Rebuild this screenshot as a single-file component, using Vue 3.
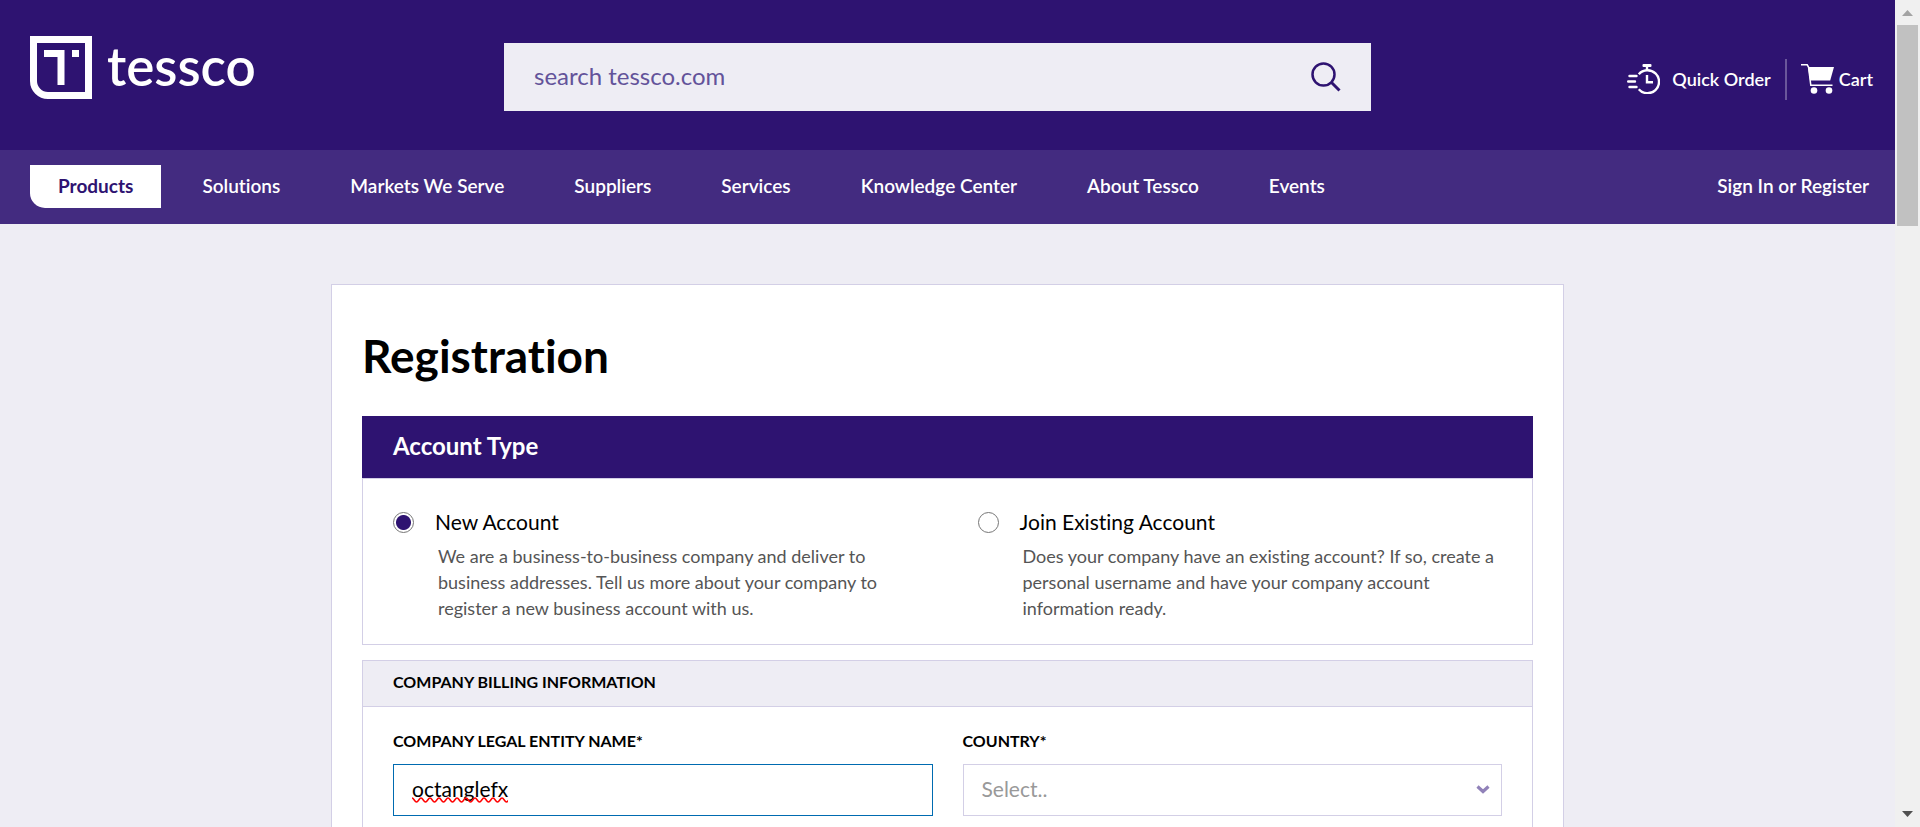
<script setup>
import { ref } from 'vue'

const navItems = [
  'Products',
  'Solutions',
  'Markets We Serve',
  'Suppliers',
  'Services',
  'Knowledge Center',
  'About Tessco',
  'Events',
]
const activeItem = 'Products'

const accountTypes = [
  {
    id: 'new',
    title: 'New Account',
    text: 'We are a business-to-business company and deliver to business addresses. Tell us more about your company to register a new business account with us.',
  },
  {
    id: 'existing',
    title: 'Join Existing Account',
    text: 'Does your company have an existing account? If so, create a personal username and have your company account information ready.',
  },
]

const accountType = ref('new')
const search = ref('')
const companyName = ref('octanglefx')
const country = ref('')
</script>

<template>
  <div class="window">
    <div class="page">
      <header class="top">
        <a class="logo" href="#" aria-label="tessco">
          <svg class="logo-mark" viewBox="0 0 62 63" aria-hidden="true">
            <path d="M3.500 3.500H58.500V59.500H18A14.500 14.500 0 0 1 3.500 45Z" fill="none" stroke="#fff" stroke-width="7" />
            <path d="M14 14H34.500V49H27.500V21H14Z" fill="#fff" />
            <rect x="42" y="14" width="7" height="7" fill="#fff" />
          </svg>
          <span class="logo-text">tessco</span>
        </a>

        <form class="search" role="search" @submit.prevent>
          <input v-model="search" type="text" placeholder="search tessco.com" aria-label="search tessco.com" />
          <button type="submit" aria-label="Search">
            <svg viewBox="0 0 30 30" aria-hidden="true">
              <circle cx="12.500" cy="12.500" r="11" fill="none" stroke="#2e1371" stroke-width="2.500" />
              <path d="M20.500 20.500L28.500 28.500" stroke="#2e1371" stroke-width="3" />
            </svg>
          </button>
        </form>

        <div class="tools">
          <a class="quick" href="#">
            <svg class="timer" viewBox="0 0 33 30" aria-hidden="true">
              <g fill="none" stroke="#fff" stroke-width="2.400">
                <path d="M11.800 10.200A11.500 11.500 0 1 1 11.800 25.200" />
                <path d="M20 11V18.200H26" />
                <path d="M20 2V6" />
                <path d="M2.500 12H9.500M1.200 17.500H8M2.500 23H9.500" stroke-linecap="round" />
              </g>
              <rect x="15.500" y="0" width="9" height="3" rx="1" fill="#fff" />
            </svg>
            <span>Quick Order</span>
          </a>
          <span class="divider"></span>
          <a class="cart" href="#">
            <svg class="cart-icon" viewBox="0 0 33 30" aria-hidden="true">
              <path d="M0 .8H6.200L7.500 3L9.800 21.300H31.500" fill="none" stroke="#fff" stroke-width="1.500" />
              <path d="M7 3H33L29.200 16.500H9Z" fill="#fff" />
              <circle cx="13" cy="26.500" r="3.300" fill="#fff" />
              <circle cx="28" cy="26.500" r="3.300" fill="#fff" />
            </svg>
            <span>Cart</span>
          </a>
        </div>
      </header>

      <nav class="nav" aria-label="Main">
        <a
          v-for="item in navItems"
          :key="item"
          href="#"
          :class="{ active: item === activeItem }"
        >{{ item }}</a>
        <a class="sign-in" href="#">Sign In or Register</a>
      </nav>

      <main class="card">
        <h1>Registration</h1>

        <section>
          <h2 class="banner">Account Type</h2>
          <div class="box types">
            <div v-for="type in accountTypes" :key="type.id" class="type">
              <input :id="type.id" v-model="accountType" type="radio" name="account-type" :value="type.id" />
              <div>
                <label :for="type.id">{{ type.title }}</label>
                <p>{{ type.text }}</p>
              </div>
            </div>
          </div>
        </section>

        <section class="billing">
          <h3>Company Billing Information</h3>
          <div class="fields">
            <div class="field">
              <label for="company">Company Legal Entity Name*</label>
              <div class="wrap">
                <input id="company" v-model="companyName" class="control focused" type="text" spellcheck="false" />
                <svg class="squiggle" aria-hidden="true">
                  <defs>
                    <pattern id="wave" width="9" height="6" patternUnits="userSpaceOnUse">
                      <path d="M0 1Q1 1 2.250 3Q3.500 5 4.500 5Q5.500 5 6.750 3Q8 1 9 1" fill="none" stroke="#f00" stroke-width="1.500" />
                    </pattern>
                  </defs>
                  <rect width="100%" height="6" fill="url(#wave)" />
                </svg>
              </div>
            </div>
            <div class="field">
              <label for="country">Country*</label>
              <div class="wrap">
                <select id="country" v-model="country" class="control">
                  <option value="">Select..</option>
                  <option value="us">United States</option>
                  <option value="ca">Canada</option>
                </select>
                <svg class="chevron" viewBox="0 0 14 9" aria-hidden="true">
                  <path d="M1.500 1.500L7 6.500L12.500 1.500" fill="none" stroke="#9182b9" stroke-width="3.200" />
                </svg>
              </div>
            </div>
          </div>
        </section>
      </main>
    </div>

    <div class="scrollbar" aria-hidden="true">
      <svg viewBox="0 0 11 6"><path d="M5.500 0L11 6H0Z" fill="#a3a3a3" /></svg>
      <div class="thumb"></div>
      <svg class="down" viewBox="0 0 11 6"><path d="M0 0H11L5.500 6Z" fill="#505050" /></svg>
    </div>
  </div>
</template>

<style>
body {
  margin: 0;
}
</style>

<style scoped>
.window {
  display: flex;
  height: 100vh;
  overflow: hidden;
  background: #eeedf4;
  color: #000;
  font-family: Lato, "Liberation Sans", sans-serif;
  font-size: 18px;
  font-variant-ligatures: none;
}

.window *,
.window {
  box-sizing: border-box;
}

.page {
  flex: 1;
  min-width: 0;
}

a {
  color: #fff;
  text-decoration: none;
}

input,
select,
button {
  margin: 0;
  font: inherit;
  color: inherit;
}

.top {
  display: grid;
  grid-template-columns: 474fr 867fr 502fr;
  align-items: center;
  height: 150px;
  padding: 0 22px 0 30px;
  background: #2e1371;
}

.logo {
  display: flex;
  align-items: center;
  gap: 15px;
  padding-bottom: 15px;
}

.logo-mark {
  width: 62px;
  height: 63px;
}

.logo-text {
  padding-bottom: 4px;
  font-size: 53px;
  font-weight: 600;
  line-height: 60px;
}

.search {
  display: flex;
  height: 68px;
  padding: 0 30px;
  margin-top: 4px;
  background: #eeedf4;
}

.search input {
  flex: 1;
  min-width: 0;
  padding: 0 0 4px;
  border: 0;
  outline: 0;
  background: none;
  color: #2e1371;
  font-size: 24px;
}

.search input::placeholder {
  color: #63539a;
  opacity: 1;
}

.search button {
  display: flex;
  align-items: center;
  padding: 0;
  border: 0;
  background: none;
}

.search button svg {
  width: 30px;
  height: 30px;
}

.tools {
  display: flex;
  align-items: center;
  justify-content: flex-end;
  gap: 14px;
  padding-top: 8px;
  font-weight: 600;
}

.quick,
.cart {
  display: flex;
  align-items: center;
}

.quick {
  gap: 12px;
}

.cart {
  gap: 5px;
}

.timer,
.cart-icon {
  width: 33px;
  height: 30px;
}

.divider {
  width: 2px;
  height: 41px;
  background: #6a579b;
}

.nav {
  display: flex;
  align-items: center;
  height: 74px;
  padding: 0 26px 2px 30px;
  background: #432b80;
  font-size: 19px;
  font-weight: 600;
}

.nav a {
  padding: 0 35px 2px;
  line-height: 41px;
}

.nav a.active {
  padding: 0 28px 2px;
  margin-right: 6px;
  border-radius: 0 0 0 15px;
  background: #fff;
  color: #2e1371;
  font-weight: 700;
}

.nav a.sign-in {
  padding: 0 0 2px;
  margin-left: auto;
}

.card {
  width: 90%;
  max-width: 1233px;
  min-height: 100%;
  padding: 40px 30px;
  margin: 60px auto 0;
  border: 1px solid #d3cfe6;
  background: #fff;
}

h1 {
  margin: 0 0 30px;
  font-size: 46px;
  font-weight: 700;
  line-height: 61px;
}

.banner {
  padding: 0 31px 2px;
  margin: 0;
  background: #2e1371;
  color: #fff;
  font-size: 24px;
  font-weight: 700;
  line-height: 60px;
}

.box {
  border: 1px solid #d3cfe6;
}

.types {
  display: grid;
  grid-template-columns: 1fr 1fr;
  padding: 26px 0 23px;
}

.type {
  display: flex;
  gap: 21px;
  padding: 0 30px;
}

.type input {
  flex: none;
  width: 21px;
  height: 21px;
  margin-top: 7px;
  appearance: none;
  border: 1px solid #767676;
  border-radius: 50%;
  background: #fff;
}

.type input:checked {
  background: radial-gradient(circle, #2e1371 7px, #fff 8px);
}

.type label {
  font-size: 21px;
  line-height: 34px;
}

.type p {
  margin: 4px 0 0;
  padding-left: 3px;
  color: #555;
  line-height: 26px;
}

.billing {
  margin-top: 15px;
  border: 1px solid #d3cfe6;
}

.billing h3 {
  padding: 0 30px 4px;
  margin: 0;
  border-bottom: 1px solid #d3cfe6;
  background: #eeedf4;
  font-size: 16px;
  font-weight: 700;
  line-height: 41px;
  text-transform: uppercase;
}

.fields {
  display: grid;
  grid-template-columns: 1fr 1fr;
  gap: 30px;
  padding: 23px 30px 60px;
}

.field > label {
  display: block;
  margin-bottom: 12px;
  font-size: 16px;
  font-weight: 700;
  line-height: 22px;
  text-transform: uppercase;
}

.control {
  display: block;
  width: 100%;
  height: 52px;
  padding: 0 18px 4px;
  border: 1px solid #d3cfe6;
  border-radius: 0;
  outline: 0;
  background: #fff;
  font-size: 21px;
  appearance: none;
}

.focused {
  border-color: #006bb1;
}

.wrap {
  position: relative;
}

.wrap select {
  color: #999;
}

.squiggle {
  position: absolute;
  top: 33px;
  left: 19px;
  width: 96px;
  height: 6px;
  pointer-events: none;
}

.chevron {
  position: absolute;
  top: 21px;
  right: 12px;
  width: 14px;
  height: 9px;
  pointer-events: none;
}

.scrollbar {
  display: flex;
  flex: none;
  flex-direction: column;
  align-items: center;
  width: 25px;
  padding: 10px 0;
  background: #f0f0f0;
}

.scrollbar svg {
  width: 11px;
  height: 6px;
}

.thumb {
  width: 21px;
  height: 201px;
  margin-top: 9px;
  background: #c1c1c1;
}

.scrollbar .down {
  margin-top: auto;
}
</style>
